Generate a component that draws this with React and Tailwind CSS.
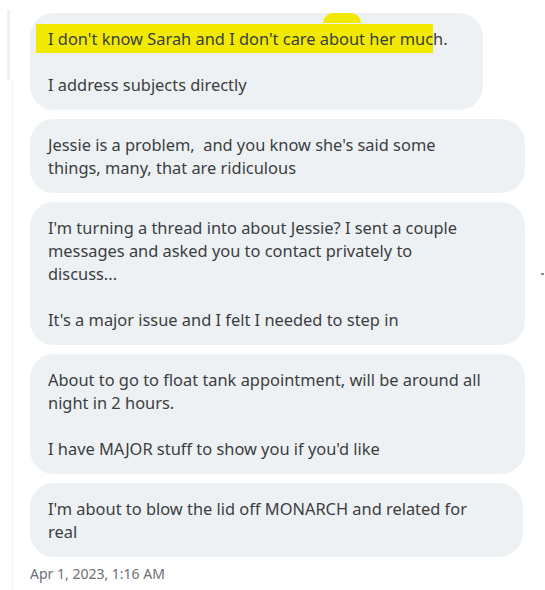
import React from "react";

function Bubble({ children, className = "" }) {
  return (
    <div
      className={
        "relative rounded-[24px] bg-[#eef1f3] pl-[18px] pr-4 py-[14px] text-[16.4px] leading-[23px] text-[#3a3e42] " +
        className
      }
    >
      {children}
    </div>
  );
}

export default function App() {
  return (
    <div
      className="relative w-[545px] h-[590px] bg-white overflow-hidden"
      style={{ fontFamily: '"Noto Sans", "Open Sans", sans-serif' }}
    >
      <div className="absolute left-[7px] top-[10px] w-[3px] h-[70px] bg-[#f0f1f2]" />
      <div className="absolute left-[12px] top-[80px] w-px h-[510px] bg-[#f1f2f3]" />
      <div className="flex flex-col gap-[9px] pl-[30px] pt-[13px]">
        <Bubble className="w-[453px]">
          <div className="absolute left-[293px] top-[0px] w-[38px] h-[10px] rounded-t-full bg-[#f1ea00]" />
          <span className="relative inline-block bg-[#f1ea00] -ml-[12px] pl-[12px] pr-0 py-[3px] -my-[3px]">
            I don't know Sarah and I don't care about her muc
          </span>
          h.
          <br />
          <br />
          I address subjects directly
        </Bubble>
        <Bubble className="w-[495px]">
          Jessie is a problem,&nbsp; and you know she's said some
          <br />
          things, many, that are ridiculous
        </Bubble>
        <Bubble className="w-[495px]">
          I'm turning a thread into about Jessie? I sent a couple
          <br />
          messages and asked you to contact privately to
          <br />
          discuss...
          <br />
          <br />
          It's a major issue and I felt I needed to step in
        </Bubble>
        <Bubble className="w-[495px]">
          About to go to float tank appointment, will be around all
          <br />
          night in 2 hours.
          <br />
          <br />
          I have MAJOR stuff to show you if you'd like
        </Bubble>
        <Bubble className="w-[493px]">
          I'm about to blow the lid off MONARCH and related for
          <br />
          real
        </Bubble>
        <div className="-mt-[2px] text-[14px] leading-[20px] text-[#6b7075]">
          Apr 1, 2023, 1:16 AM
        </div>
      </div>
      <div className="absolute left-[541px] top-[273px] w-[3px] h-[2px] bg-[#888]" />
    </div>
  );
}
